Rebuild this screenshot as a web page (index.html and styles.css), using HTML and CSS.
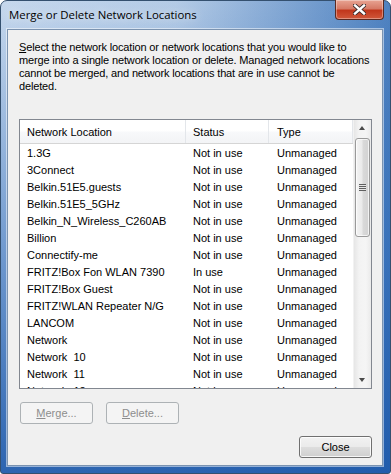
FILE: index.html
```html
<!DOCTYPE html>
<html lang="en">
<head>
  <meta charset="UTF-8" />
  <title>Merge or Delete Network Locations</title>
  <link rel="stylesheet" href="styles.css">
</head>
<body>

  <!-- Dialog window -->
  <div class="window">
    <div class="titlebar">
      <span class="title">Merge or Delete Network Locations</span>
      <button class="caption-close" aria-label="Close">
        <svg width="13" height="11" viewBox="0 0 13 11">
          <path d="M2 1.5 L11 9.5 M11 1.5 L2 9.5" stroke="#3a2a2a" stroke-width="4.2" stroke-linecap="square"/>
          <path d="M2 1.5 L11 9.5 M11 1.5 L2 9.5" stroke="#fff" stroke-width="2.4" stroke-linecap="square"/>
        </svg>
      </button>
    </div>

    <div class="client">
      <p class="intro"><u>S</u>elect the network location or network locations that you would like to merge into a single network location or delete. Managed network locations cannot be merged, and network locations that are in use cannot be deleted.</p>

      <!-- List view -->
      <div class="listview">
        <div class="list">
          <div class="row head">
            <span>Network Location</span><span>Status</span><span>Type</span><span></span>
          </div>
          <div class="row"><span>1.3G</span><span>Not in use</span><span>Unmanaged</span></div>
          <div class="row"><span>3Connect</span><span>Not in use</span><span>Unmanaged</span></div>
          <div class="row"><span>Belkin.51E5.guests</span><span>Not in use</span><span>Unmanaged</span></div>
          <div class="row"><span>Belkin.51E5_5GHz</span><span>Not in use</span><span>Unmanaged</span></div>
          <div class="row"><span>Belkin_N_Wireless_C260AB</span><span>Not in use</span><span>Unmanaged</span></div>
          <div class="row"><span>Billion</span><span>Not in use</span><span>Unmanaged</span></div>
          <div class="row"><span>Connectify-me</span><span>Not in use</span><span>Unmanaged</span></div>
          <div class="row"><span>FRITZ!Box Fon WLAN 7390</span><span>In use</span><span>Unmanaged</span></div>
          <div class="row"><span>FRITZ!Box Guest</span><span>Not in use</span><span>Unmanaged</span></div>
          <div class="row"><span>FRITZ!WLAN Repeater N/G</span><span>Not in use</span><span>Unmanaged</span></div>
          <div class="row"><span>LANCOM</span><span>Not in use</span><span>Unmanaged</span></div>
          <div class="row"><span>Network</span><span>Not in use</span><span>Unmanaged</span></div>
          <div class="row"><span>Network&nbsp; 10</span><span>Not in use</span><span>Unmanaged</span></div>
          <div class="row"><span>Network&nbsp; 11</span><span>Not in use</span><span>Unmanaged</span></div>
          <div class="row"><span>Network&nbsp; 12</span><span>Not in use</span><span>Unmanaged</span></div>
        </div>
        <div class="scrollbar">
          <div class="arrow up"></div>
          <div class="thumb"><span class="grip"></span></div>
          <div class="track"></div>
          <div class="arrow down"></div>
        </div>
      </div>

      <div class="actions">
        <button class="btn" disabled><u>M</u>erge...</button>
        <button class="btn" disabled><u>D</u>elete...</button>
      </div>

      <div class="footer">
        <button class="btn default">Close</button>
      </div>
    </div>
  </div>

</body>
</html>
```

FILE: styles.css
```css
/* Base */
body {
  margin: 0;
  padding: 0;
  background: #fff;
}

/* Window frame */
.window {
  width: 391px;
  height: 474px;
  box-sizing: border-box;
  display: flex;
  flex-direction: column;
  border: 1px solid #34506f;
  border-radius: 7px 7px 3px 3px;
  background:
    linear-gradient(to bottom, rgba(36, 98, 180, 0) 0%, rgba(36, 98, 180, 0.55) 55%, rgba(28, 88, 170, 0.9) 100%),
    linear-gradient(to right, #c6d8ed 0%, #b4cbe6 45%, #7ea4d2 75%, #4f82c0 100%);
  font-family: "Liberation Sans", Arial, sans-serif;
  font-size: 11px;
  color: #000;
}

.titlebar {
  height: 28px;
  position: relative;
  display: flex;
  align-items: center;
  padding-left: 8px;
}

.title {
  font-family: "Open Sans", "Noto Sans", sans-serif;
  font-size: 11.4px;
  color: #000;
  margin-top: -1px;
  text-shadow: 0 0 8px rgba(255, 255, 255, 0.9);
}

.caption-close {
  position: absolute;
  top: -1px;
  right: 6px;
  width: 49px;
  height: 20px;
  padding: 0;
  border: 1px solid #5a2a22;
  border-top: none;
  border-radius: 0 0 4px 4px;
  background: linear-gradient(to bottom, #e8a493 0%, #d67a66 45%, #c1371c 55%, #d0583a 100%);
  box-shadow: inset 0 0 0 1px rgba(255, 255, 255, 0.35);
  display: flex;
  align-items: center;
  justify-content: center;
}

/* Client area */
.client {
  flex: 1;
  margin: 0 7px 7px 6px;
  background: #f0f0f0;
  border: 1px solid #7b93b0;
  box-shadow: 0 0 0 1px rgba(255, 255, 255, 0.5);
  padding: 11px 10px 7px 11px;
  display: flex;
  flex-direction: column;
}

.intro {
  margin: 0;
  line-height: 13px;
  letter-spacing: -0.15px;
}

/* List view */
.listview {
  margin-top: 26px;
  height: 268px;
  border: 1px solid #828790;
  background: #fff;
  display: flex;
  overflow: hidden;
}

.list {
  flex: 1;
  overflow: hidden;
}

.row {
  display: grid;
  grid-template-columns: 166px 83px 84px 1fr;
  height: 17px;
  align-items: center;
  white-space: nowrap;
}

.row span {
  padding-left: 7px;
  overflow: hidden;
}

.row span:nth-child(3) {
  padding-left: 8px;
}

.row.head {
  height: 23px;
  border-bottom: 1px solid #d5d5d5;
  background: linear-gradient(to bottom, #fff 0%, #fff 45%, #f7f8fa 55%, #f3f4f6 100%);
}

.row.head span {
  height: 100%;
  display: flex;
  align-items: center;
  border-right: 1px solid #e3e6ea;
  box-sizing: border-box;
}

.row.head span:last-child {
  border-right: none;
}

/* Scrollbar */
.scrollbar {
  width: 17px;
  display: flex;
  flex-direction: column;
  background: linear-gradient(to right, #e6e6e6 0%, #f3f3f3 30%, #f5f5f5 70%, #eaeaea 100%);
  border-left: 1px solid #f2f2f2;
}

.arrow {
  height: 17px;
  position: relative;
}

.arrow::after {
  content: "";
  position: absolute;
  left: 5px;
  top: 6px;
  border-left: 3.5px solid transparent;
  border-right: 3.5px solid transparent;
}

.arrow.up::after {
  border-bottom: 4px solid #4a4a4a;
}

.arrow.down::after {
  top: 7px;
  border-top: 4px solid #4a4a4a;
}

.thumb {
  height: 99px;
  margin: 1px 1px 0 1px;
  border: 1px solid #9a9a9a;
  border-radius: 3px;
  box-sizing: border-box;
  background: linear-gradient(to right, #f4f4f4 0%, #eaeaea 45%, #d9d9d9 55%, #d2d2d2 100%);
  box-shadow: inset 0 0 0 1px rgba(255, 255, 255, 0.7);
  display: flex;
  align-items: center;
  justify-content: center;
}

.grip {
  width: 7px;
  height: 7px;
  background: repeating-linear-gradient(to bottom, #5f5f5f 0, #5f5f5f 1px, #e6e6e6 1px, #e6e6e6 2px);
}

.track {
  flex: 1;
}

/* Buttons */
.actions {
  margin-top: 13px;
  display: flex;
  gap: 13px;
  padding-left: 1px;
}

.btn {
  width: 73px;
  height: 22px;
  padding: 0;
  font-family: "Liberation Sans", Arial, sans-serif;
  font-size: 11px;
  color: #000;
  border: 1px solid #707070;
  border-radius: 3px;
  background: linear-gradient(to bottom, #f2f2f2 0%, #ebebeb 48%, #dddddd 52%, #cfcfcf 100%);
  box-shadow: inset 0 0 0 1px rgba(255, 255, 255, 0.8);
}

.btn:disabled {
  color: #8d8d8d;
  border-color: #adb2b5;
  background: #f4f4f4;
  box-shadow: none;
}

.footer {
  margin-top: auto;
  display: flex;
  justify-content: flex-end;
}
```
